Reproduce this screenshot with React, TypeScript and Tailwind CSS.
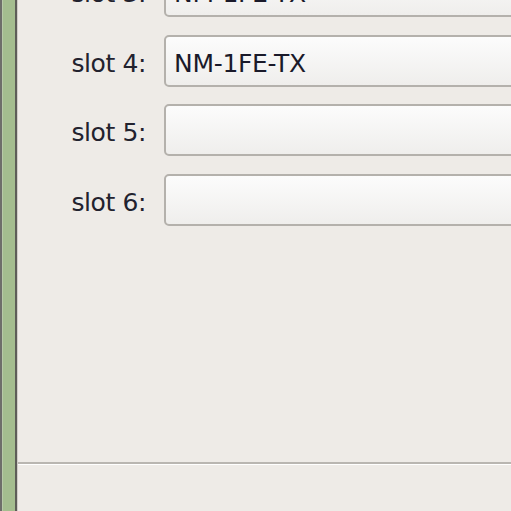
import React from "react";

const Field = ({ value }: { value?: string }) => (
  <div className="h-[52px] flex-1 min-w-0 rounded-[5px] border-2 border-[#b4b1ac] bg-gradient-to-b from-[#fcfcfc] to-[#efeeec] flex items-center pl-[8px] pt-[5px] text-[25px] tracking-[-0.3px] text-[#1a1a2a] whitespace-nowrap mr-[-20px] leading-none">
    {value}
  </div>
);

const Row = ({ label, value }: { label: string; value?: string }) => (
  <div className="flex items-center">
    <div className="w-[128px] shrink-0 text-right text-[25px] tracking-[-0.4px] text-[#22222e] pt-[5px] whitespace-nowrap leading-none">{label}</div>
    <div className="w-[18px] shrink-0" />
    <Field value={value} />
  </div>
);

export default function App() {
  return (
    <div
      className="w-[511px] h-[511px] overflow-hidden flex bg-[#eeebe7]"
      style={{ fontFamily: '"DejaVu Sans", Verdana, sans-serif' }}
    >
      <div className="flex h-full shrink-0">
        <div className="w-[2px] bg-[#6e6e6a]" />
        <div className="w-[1px] bg-[#b8c9a8]" />
        <div className="w-[12px] bg-[#a4bd8f]" />
        <div className="w-[2px] bg-[#5d5d58]" />
        <div className="w-[1px] bg-[#cfccc7]" />
      </div>
      <div className="flex-1 flex flex-col overflow-hidden">
        <div className="h-[462px] overflow-hidden">
          <div className="mt-[-35px] flex flex-col gap-[17.5px]">
            <Row label="slot 3:" value="NM-1FE-TX" />
            <Row label="slot 4:" value="NM-1FE-TX" />
            <Row label="slot 5:" />
            <Row label="slot 6:" />
          </div>
        </div>
        <div className="h-[2px] bg-[#b9b6b1]" />
        <div className="h-[1px] bg-[#ffffff]" />
        <div className="flex-1" />
      </div>
    </div>
  );
}
